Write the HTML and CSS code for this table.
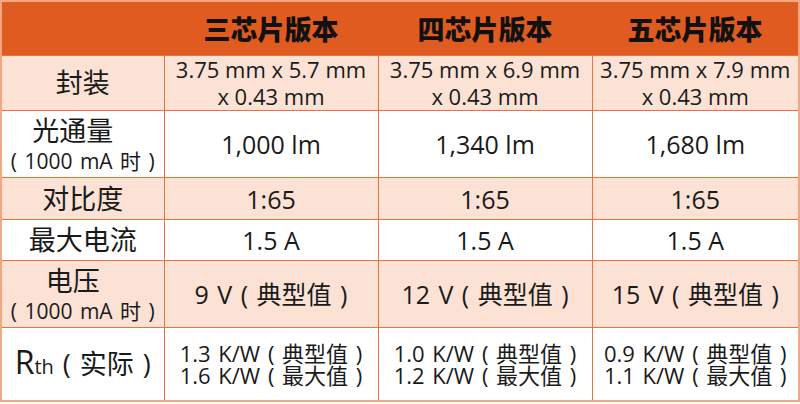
FILE: index.html
```html
<!DOCTYPE html>
<html lang="zh-CN">
<head>
<meta charset="utf-8">
<link rel="stylesheet" href="styles.css">
</head>
<body>
<table class="spec">
  <colgroup>
    <col class="c-label"><col class="c-val"><col class="c-val"><col class="c-last">
  </colgroup>
  <thead>
    <tr class="r-head">
      <th></th><th>三芯片版本</th><th>四芯片版本</th><th>五芯片版本</th>
    </tr>
  </thead>
  <tbody>
    <tr class="r-pkg tint">
      <td class="lbl">封装</td>
      <td class="val dims">3.75 mm x 5.7 mm<br>x 0.43 mm</td>
      <td class="val dims">3.75 mm x 6.9 mm<br>x 0.43 mm</td>
      <td class="val dims">3.75 mm x 7.9 mm<br>x 0.43 mm</td>
    </tr>
    <tr class="r-flux">
      <td class="lbl"><span class="main">光通量</span><span class="sub">( 1000 mA 时 )</span></td>
      <td class="val">1,000 lm</td>
      <td class="val">1,340 lm</td>
      <td class="val">1,680 lm</td>
    </tr>
    <tr class="r-cr tint">
      <td class="lbl">对比度</td>
      <td class="val">1:65</td>
      <td class="val">1:65</td>
      <td class="val">1:65</td>
    </tr>
    <tr class="r-cur">
      <td class="lbl">最大电流</td>
      <td class="val">1.5 A</td>
      <td class="val">1.5 A</td>
      <td class="val">1.5 A</td>
    </tr>
    <tr class="r-volt tint">
      <td class="lbl"><span class="main">电压</span><span class="sub">( 1000 mA 时 )</span></td>
      <td class="val cn">9 V ( 典型值 )</td>
      <td class="val cn">12 V ( 典型值 )</td>
      <td class="val cn">15 V ( 典型值 )</td>
    </tr>
    <tr class="r-rth">
      <td class="lbl cn"><span class="rth-r">R</span><span class="rth-th">th</span> ( 实际 )</td>
      <td class="val rth cn">1.3 K/W ( 典型值 )<br>1.6 K/W ( 最大值 )</td>
      <td class="val rth cn">1.0 K/W ( 典型值 )<br>1.2 K/W ( 最大值 )</td>
      <td class="val rth cn">0.9 K/W ( 典型值 )<br>1.1 K/W ( 最大值 )</td>
    </tr>
  </tbody>
</table>
</body>
</html>
```

FILE: styles.css
```css
html, body {
  margin: 0;
  padding: 0;
  background: #ffffff;
}

body {
  font-family: "Open Sans", "Noto Sans CJK SC", sans-serif;
  color: #1a1a1a;
}

.spec {
  border-collapse: collapse;
  table-layout: fixed;
  width: 798px;
  border: 2px solid #f2a883;
}

.c-label { width: 163px; }
.c-val { width: 214px; }
.c-last { width: 207px; }

.spec th,
.spec td {
  padding: 0;
  text-align: center;
  vertical-align: middle;
  border: 1px solid #e8733f;
}

.r-head th {
  background: #e05b1f;
  height: 53px;
  font-family: "Noto Sans CJK SC", sans-serif;
  font-weight: 900;
  font-size: 27px;
  color: #111;
  border: none;
  border-bottom: 1px solid #e8733f;
}

.tint td { background: #fbe2d5; }

.lbl {
  font-family: "Open Sans", "Noto Sans CJK SC", sans-serif;
  font-size: 27px;
  line-height: 34px;
}

.main {
  display: block;
  padding-right: 20px;
}

.sub {
  display: block;
  font-size: 21px;
  line-height: 26px;
  word-spacing: 2px;
}

.val {
  font-size: 25px;
  line-height: 28px;
  padding-bottom: 2px;
}

.cn {
  word-spacing: 2px;
}

.dims {
  font-size: 22px;
  line-height: 27px;
  padding-bottom: 0;
}

.rth {
  font-size: 22px;
  line-height: 22px;
  padding-bottom: 0;
}

.rth-r {
  font-size: 32px;
}

.rth-th {
  font-size: 20px;
}

.r-pkg td { height: 54px; }
.r-flux td { height: 66px; }
.r-cr td { height: 41px; }
.r-cur td { height: 40px; }
.r-volt td { height: 66px; }
.r-rth td { height: 72px; }
```
